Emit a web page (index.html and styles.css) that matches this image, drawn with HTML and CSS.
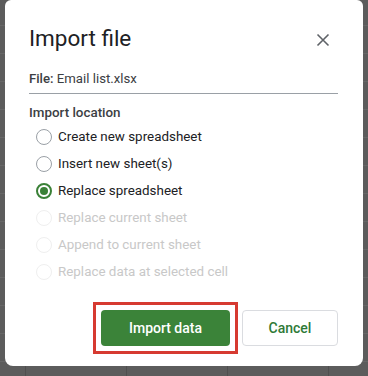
FILE: index.html
```html
<!DOCTYPE html>
<html lang="en">
<head>
    <meta charset="UTF-8">
    <meta name="viewport" content="width=device-width, initial-scale=1.0">
    <title>Import file</title>
    <link rel="stylesheet" href="styles.css">
</head>
<body>

<div class="dialog">
    <div class="dialog-header">
        <h2>Import file</h2>
        <button class="close-btn" aria-label="Close">
            <svg width="14" height="14" viewBox="0 0 14 14">
                <path d="M1.5 1.5 L12.5 12.5 M12.5 1.5 L1.5 12.5" stroke="#5f6368" stroke-width="1.6" fill="none"/>
            </svg>
        </button>
    </div>

    <div class="file-name"><b>File:</b> Email list.xlsx</div>

    <div class="section-title">Import location</div>

    <!-- Import location options -->
    <div class="options">
        <label class="option"><span class="radio"></span>Create new spreadsheet</label>
        <label class="option"><span class="radio"></span>Insert new sheet(s)</label>
        <label class="option"><span class="radio checked"></span>Replace spreadsheet</label>
        <label class="option disabled"><span class="radio"></span>Replace current sheet</label>
        <label class="option disabled"><span class="radio"></span>Append to current sheet</label>
        <label class="option disabled"><span class="radio"></span>Replace data at selected cell</label>
    </div>

    <div class="dialog-buttons">
        <!-- red annotation box around the primary button -->
        <span class="highlight">
            <button class="btn btn-primary">Import data</button>
        </span>
        <button class="btn btn-secondary">Cancel</button>
    </div>
</div>

</body>
</html>
```

FILE: styles.css
```css
body {
    font-family: 'Roboto', 'Liberation Sans', sans-serif;
    margin: 0;
    padding: 0 5px;
    height: 376px;
    overflow: hidden;
    background-color: #5c5c5c;
    background-image:
        linear-gradient(90deg, transparent 20px, #4f4f4f 20px, #4f4f4f 21px, transparent 21px),
        linear-gradient(0deg, transparent 26px, #676767 26px, #676767 27px, transparent 27px);
    background-size: 101px 100%, 100% 28px;
    background-position: 5px 0, 0 -4px;
}
.dialog {
    box-sizing: border-box;
    height: 366px;
    background-color: #fff;
    border-radius: 6px 6px 8px 8px;
    padding: 22px 25px 0 24px;
    color: #202124;
}
.dialog-header {
    display: flex;
    justify-content: space-between;
    align-items: center;
    height: 32px;
}
.dialog-header h2 {
    margin: 0;
    font-size: 22.5px;
    font-weight: 400;
    line-height: 32px;
    color: #202124;
}
.close-btn {
    background: none;
    border: none;
    padding: 0;
    margin: 4px 8px 0 0;
    width: 14px;
    height: 14px;
    display: flex;
    cursor: pointer;
}
.file-name {
    margin-top: 15px;
    font-size: 13.2px;
    line-height: 20px;
    color: #3c4043;
    padding-bottom: 4px;
    border-bottom: 1px solid #9aa0a6;
}
.file-name b {
    font-weight: 500;
}
.section-title {
    margin-top: 9px;
    font-size: 13.4px;
    font-weight: 500;
    line-height: 20px;
    color: #3c4043;
}
.options {
    display: flex;
    flex-direction: column;
}
.option {
    display: flex;
    align-items: center;
    height: 27px;
    font-size: 13.4px;
    color: #202124;
    cursor: pointer;
}
.radio {
    box-sizing: border-box;
    width: 16px;
    height: 16px;
    margin: 0 6px 0 7px;
    border: 1px solid #9aa0a6;
    border-radius: 50%;
    display: flex;
    align-items: center;
    justify-content: center;
}
.radio.checked {
    border: 2px solid #3a8137;
}
.radio.checked::after {
    content: "";
    width: 8px;
    height: 8px;
    border-radius: 50%;
    background-color: #3a8137;
}
.option.disabled {
    color: #c8c8c8;
    cursor: default;
}
.option.disabled .radio {
    border-color: #efefef;
}
.dialog-buttons {
    display: flex;
    justify-content: flex-end;
    align-items: center;
    gap: 4px;
    margin-top: 17px;
}
.highlight {
    display: flex;
    padding: 5px;
    border: 3px solid #d63a31;
}
.btn {
    font-family: 'Roboto', 'Liberation Sans', sans-serif;
    font-size: 14px;
    font-weight: 500;
    height: 36px;
    border-radius: 4px;
    cursor: pointer;
}
.btn-primary {
    width: 129px;
    background-color: #3b8339;
    color: #fff;
    border: none;
}
.btn-secondary {
    width: 96px;
    background-color: #fff;
    color: #2f7a37;
    border: 1px solid #dadce0;
}
```
